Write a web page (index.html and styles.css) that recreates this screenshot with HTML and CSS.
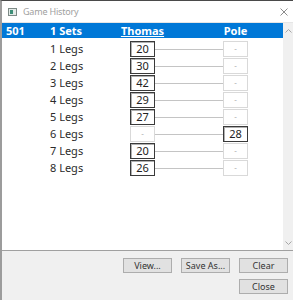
FILE: index.html
```html
<!DOCTYPE html>
<html lang="en">

<head>
    <meta charset="UTF-8">
    <title>Game History</title>
    <link rel="stylesheet" href="styles.css">
</head>

<body>
    <div class="window">
        <div class="titlebar">
            <svg class="app-icon" width="9" height="8" viewBox="0 0 9 8">
                <rect x="0.5" y="0.5" width="8" height="7" fill="#e3ebe8" stroke="#7d8a86" />
                <rect x="2" y="2" width="3" height="4" fill="#3d8f78" />
            </svg>
            <span class="title">Game History</span>
            <svg class="close" width="8" height="8" viewBox="0 0 8 8">
                <path d="M0.5 0.5 L7.5 7.5 M7.5 0.5 L0.5 7.5" stroke="#8c8c8c" stroke-width="1" fill="none" />
            </svg>
        </div>

        <div class="list">
            <div class="content">
                <div class="head">
                    <span class="game">501</span>
                    <span>1 Sets</span>
                    <span class="player">Thomas</span>
                    <span></span>
                    <span class="player plain">Pole</span>
                </div>

                <div class="legs" id="legs"></div>
            </div>

            <div class="scrollbar">
                <svg width="7" height="4" viewBox="0 0 7 4">
                    <path d="M0.5 3.5 L3.5 0.5 L6.5 3.5" stroke="#a6a6a6" fill="none" />
                </svg>
                <svg width="7" height="4" viewBox="0 0 7 4">
                    <path d="M0.5 0.5 L3.5 3.5 L6.5 0.5" stroke="#a6a6a6" fill="none" />
                </svg>
            </div>
        </div>

        <div class="footer">
            <div class="buttons">
                <button class="btn">View...</button>
                <button class="btn">Save As...</button>
                <button class="btn">Clear</button>
            </div>
            <div class="buttons">
                <button class="btn">Close</button>
            </div>
        </div>
    </div>

    <script>
        // leg winners: [thomas, pole]
        const legs = [
            [20, null],
            [30, null],
            [42, null],
            [29, null],
            [27, null],
            [null, 28],
            [20, null],
            [26, null]
        ];

        const container = document.getElementById('legs');

        function box(value) {
            const el = document.createElement('div');
            if (value === null) {
                el.className = 'score empty';
                el.textContent = '-';
            } else {
                el.className = 'score';
                el.textContent = value;
            }
            return el;
        }

        legs.forEach((leg, i) => {
            const row = document.createElement('div');
            row.className = 'leg';

            const spacer = document.createElement('span');
            const label = document.createElement('span');
            label.className = 'label';
            label.textContent = (i + 1) + ' Legs';

            const line = document.createElement('div');
            line.className = 'link';

            row.append(spacer, label, box(leg[0]), line, box(leg[1]));
            container.appendChild(row);
        });
    </script>
</body>

</html>
```

FILE: styles.css
```css
body {
    margin: 0;
    background: #ffffff;
    font-family: "Noto Sans", sans-serif;
}

.window {
    width: 293px;
    height: 300px;
    box-sizing: border-box;
    border-top: 1px solid #4a4a4a;
    border-left: 2px solid #9c9c9c;
    display: flex;
    flex-direction: column;
    background: #f0f0f0;
    overflow: hidden;
}

.titlebar {
    height: 21px;
    flex-shrink: 0;
    display: flex;
    align-items: center;
    padding-left: 6px;
    padding-right: 5px;
    background: #ffffff;
}

.app-icon {
    margin-right: 6px;
}

.title {
    flex: 1;
    font-size: 9px;
    letter-spacing: -0.2px;
    color: #a0a0a0;
}

.list {
    height: 227px;
    flex-shrink: 0;
    display: flex;
    background: #ffffff;
    border-top: 1px solid #e6e6e6;
    border-bottom: 1px solid #a0a0a0;
}

.content {
    flex: 1;
}

.head {
    height: 15px;
    display: grid;
    grid-template-columns: 48px 70px 45px 48px 45px;
    align-items: center;
    background: #0078d7;
    color: #ffffff;
    font-size: 11px;
    font-weight: bold;
    line-height: 15px;
}

.head .game {
    padding-left: 4px;
}

.head .player {
    text-align: center;
    text-decoration: underline;
}

.head .player.plain {
    text-decoration: none;
}

.legs {
    padding-top: 2px;
}

.leg {
    height: 17px;
    padding-top: 1px;
    box-sizing: border-box;
    display: grid;
    grid-template-columns: 48px 80px 25px 68px 25px;
    align-items: center;
}

.label {
    font-size: 11px;
    color: #2b2b2b;
    line-height: 16px;
}

.score {
    height: 16px;
    box-sizing: border-box;
    border: 1px solid #3a3a3a;
    box-shadow: inset 1px 1px 0 #b0b0b0;
    font-size: 11px;
    line-height: 14px;
    text-align: center;
    color: #222222;
}

.score.empty {
    border-color: #d9d9d9;
    box-shadow: none;
    color: #b5b5b5;
    font-size: 8px;
}

.link {
    height: 1px;
    background: #c4c4c4;
}

.scrollbar {
    width: 10px;
    background: #f0f0f0;
    display: flex;
    flex-direction: column;
    align-items: center;
    justify-content: space-between;
    padding: 6px 0 5px;
}

.footer {
    flex: 1;
    display: flex;
    flex-direction: column;
    align-items: flex-end;
    gap: 6px;
    padding: 7px 5px 0 0;
}

.buttons {
    display: flex;
    gap: 9px;
}

.btn {
    width: 49px;
    height: 15px;
    padding: 0;
    border: 1px solid #adadad;
    background: #e1e1e1;
    font-family: "Noto Sans", sans-serif;
    font-size: 9px;
    color: #333333;
    line-height: 13px;
}
```
